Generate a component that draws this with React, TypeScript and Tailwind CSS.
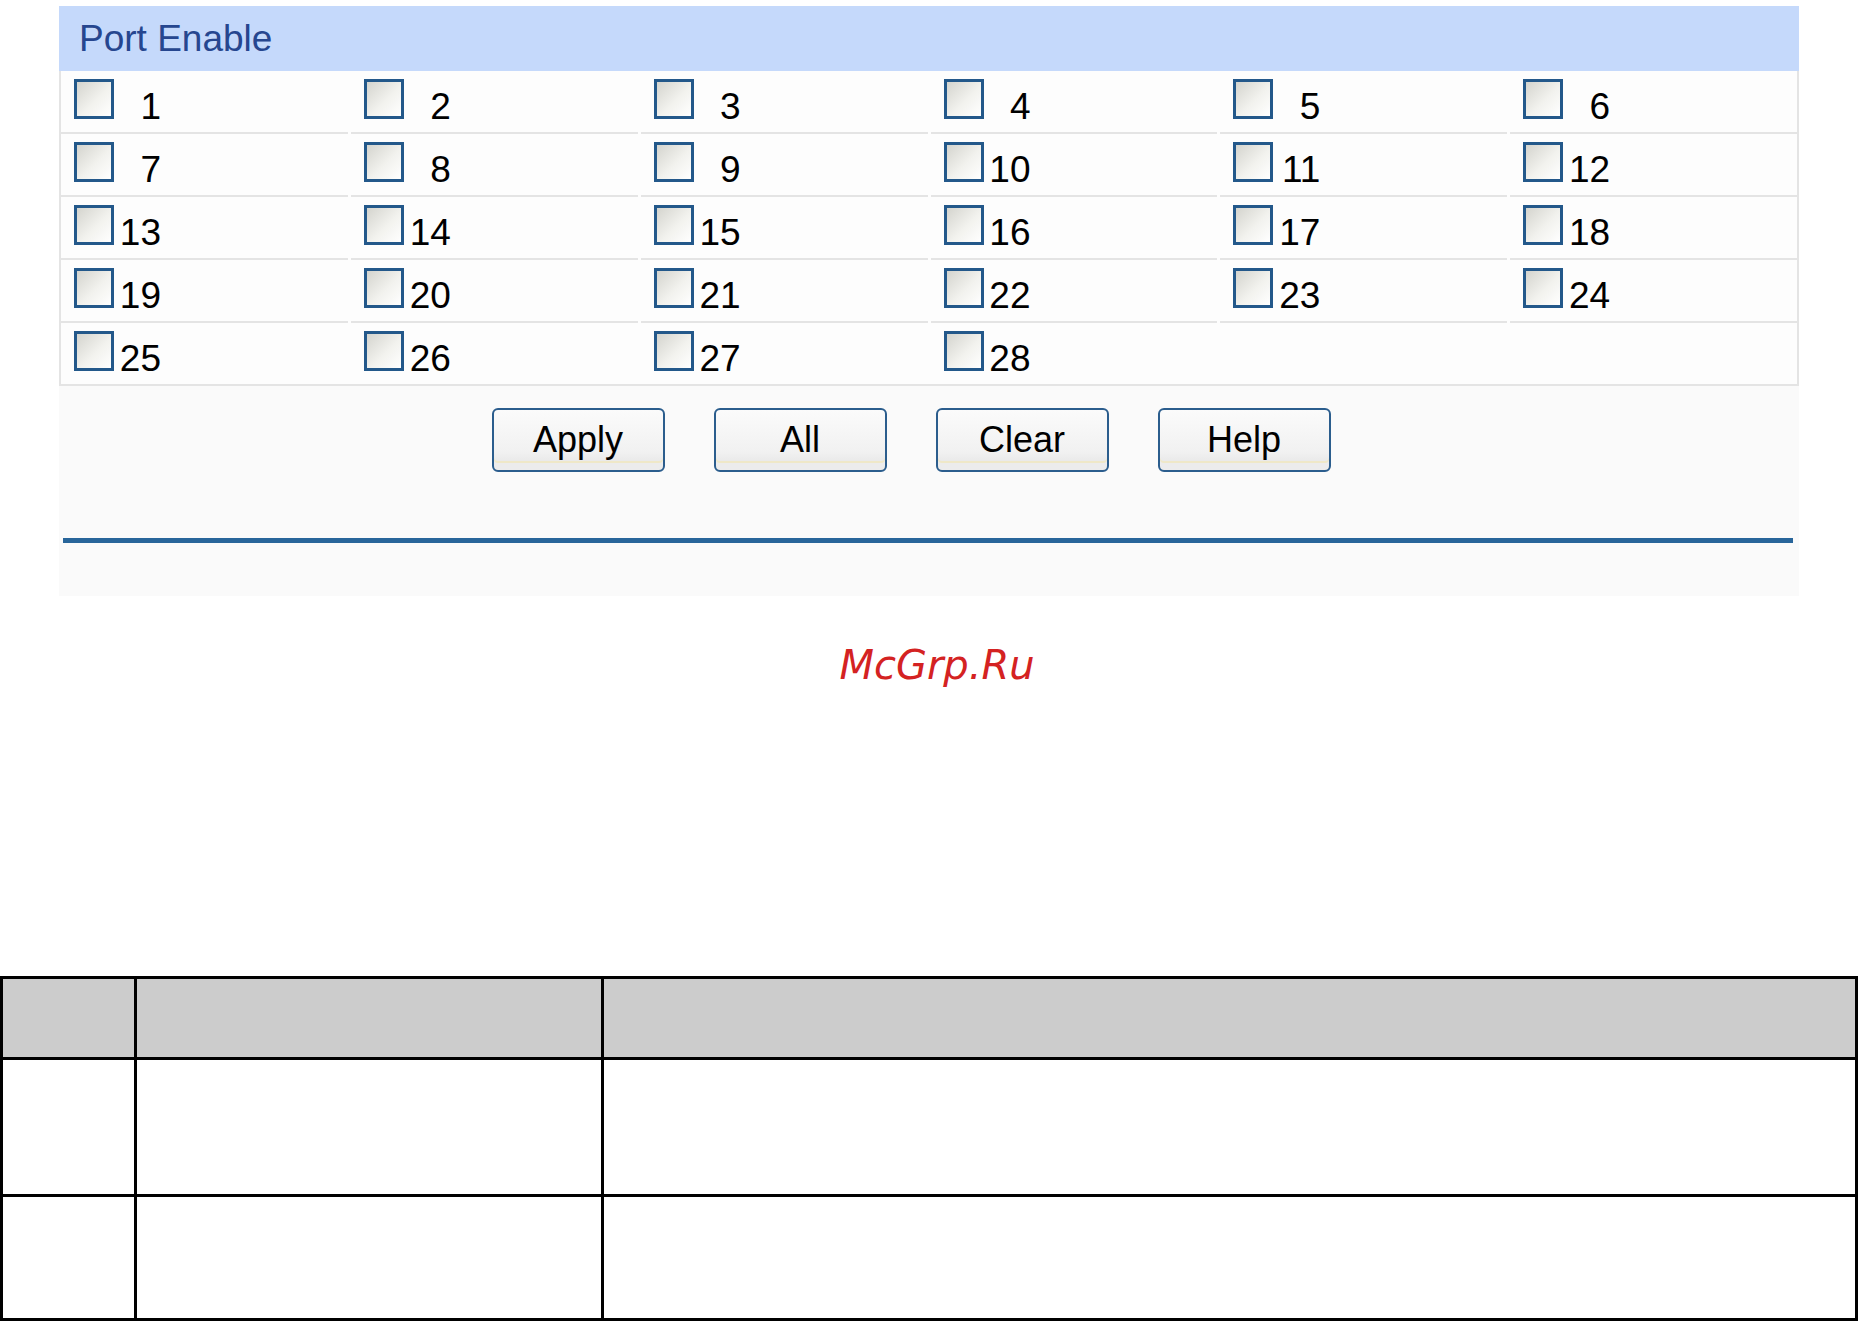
const ports = Array.from({ length: 30 }, (_, i) => i + 1);
const buttons = ["Apply", "All", "Clear", "Help"];

export default function App() {
  return (
    <div className="min-h-[1322px] w-[1860px] bg-white font-['Liberation_Sans',Arial,sans-serif]">
      <div className="ml-[59px] pt-[6px]">
        <div className="w-[1740px] bg-[#fafafa]">
          <div className="flex h-[65px] items-center bg-[#c5d9fb] pl-[20px] text-[37px] leading-none text-[#26468f]">
            Port Enable
          </div>

          <div className="grid grid-cols-6 gap-x-[3px] border-x-2 border-b-2 border-[#e4e4e4] bg-[#fdfdfd]">
            {ports.map((n, i) => (
              <PortCell key={n} port={n <= 28 ? n : null} last={i >= 24} />
            ))}
          </div>

          <div className="mt-[22px] flex justify-center gap-[49px] pr-[36px]">
            {buttons.map((b) => (
              <button
                key={b}
                className="h-[64px] w-[173px] rounded-[6px] border-2 border-[#2b5d8d] bg-[linear-gradient(180deg,#fbfbfb_0%,#f1f1f1_70%,#e2e2e2_100%)] text-[36px] leading-none text-black shadow-[inset_0_-7px_0_#ececec,inset_0_-9px_0_#efe8c8]"
              >
                {b}
              </button>
            ))}
          </div>

          <div className="ml-[4px] mr-[6px] mt-[66px] h-[5px] bg-[#28659a]" />
          <div className="h-[53px]" />
        </div>
      </div>

      <p className="mt-[49px] pl-[14px] text-center font-['DejaVu_Sans',sans-serif] text-[40px] italic leading-none text-[#d42222]">
        McGrp.Ru
      </p>

      <table className="mt-[291px] w-[1858px] border-collapse">
        <tbody>
          <tr className="h-[81px] bg-[#cccccc]">
            <td className="w-[134px] border-[3px] border-black" />
            <td className="w-[467px] border-[3px] border-black" />
            <td className="border-[3px] border-black" />
          </tr>
          <tr className="h-[137px]">
            <td className="border-[3px] border-black" />
            <td className="border-[3px] border-black" />
            <td className="border-[3px] border-black" />
          </tr>
          <tr className="h-[124px]">
            <td className="border-[3px] border-black" />
            <td className="border-[3px] border-black" />
            <td className="border-[3px] border-black" />
          </tr>
        </tbody>
      </table>
    </div>
  );
}

function PortCell({ port, last }: { port: number | null; last: boolean }) {
  return (
    <div
      className={`flex items-end pl-[13px] ${
        last ? "h-[61px] pb-[13px]" : "h-[63px] border-b-2 border-[#e4e4e4] pb-[13px]"
      }`}
    >
      {port !== null && (
        <>
          <span className="h-[40px] w-[40px] border-[3px] border-[#23588a] bg-[linear-gradient(135deg,#d4d4ce_0%,#f2f2ee_55%,#ffffff_100%)]" />
          <span className="mb-[-6px] ml-[5px] inline-block w-[42px] text-right text-[37px] leading-none text-black">
            {port}
          </span>
        </>
      )}
    </div>
  );
}
